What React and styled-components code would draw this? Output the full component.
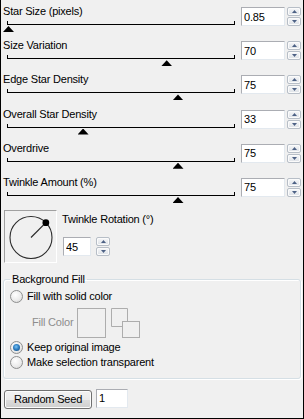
import React from 'react';
import styled, { createGlobalStyle } from 'styled-components';

const GlobalStyle = createGlobalStyle`
  html, body {
    margin: 0;
    padding: 0;
    background: #f0f0f0;
  }
  body {
    font-family: "Liberation Sans", Arial, sans-serif;
    font-size: 11px;
    letter-spacing: -0.2px;
    color: #000;
  }
`;

const sliders = [
  { label: 'Star Size (pixels)', value: '0.85', frac: 0 },
  { label: 'Size Variation', value: '70', frac: 0.7 },
  { label: 'Edge Star Density', value: '75', frac: 0.75 },
  { label: 'Overall Star Density', value: '33', frac: 0.33 },
  { label: 'Overdrive', value: '75', frac: 0.75 },
  { label: 'Twinkle Amount (%)', value: '75', frac: 0.75 },
];

const Panel = styled.div`
  box-sizing: border-box;
  width: 304px;
  height: 419px;
  background: #f0f0f0;
  border: 1px solid #000;
  border-top: none;
  padding: 5px 2px 0 2px;
  display: flex;
  flex-direction: column;
`;

const SliderRow = styled.div`
  display: flex;
  align-items: flex-start;
  height: 34.2px;
  flex-shrink: 0;
`;

const SliderCol = styled.div`
  flex: 1;
  display: flex;
  flex-direction: column;
`;

const Label = styled.div`
  line-height: 13px;
  white-space: nowrap;
  color: ${(p) => (p.$disabled ? '#8d8d8d' : '#000')};
`;

const Track = styled.div`
  position: relative;
  margin: 3px 0 0 4px;
  height: 3px;
  border: 1px solid #000;
  border-top: none;
`;

const Thumb = styled.div`
  position: absolute;
  top: calc(100% + 2px);
  width: 11px;
  height: 6px;
  background: #000;
  clip-path: polygon(50% 0, 100% 100%, 0 100%);
`;

const NumBox = styled.input`
  box-sizing: border-box;
  width: ${(p) => p.$w}px;
  height: 19px;
  margin: ${(p) => p.$mt || 0}px 0 0 ${(p) => p.$ml || 0}px;
  border: 1px solid;
  border-color: #abadb3 #e3e9ef #e3e9ef #abadb3;
  padding: 0 2px;
  font: inherit;
  letter-spacing: inherit;
  color: #000;
  background: #fff;
  outline: none;
`;

const Spinner = styled.div`
  box-sizing: border-box;
  width: 14px;
  height: 19px;
  margin: ${(p) => p.$mt || 0}px 0 0 ${(p) => p.$ml}px;
  display: flex;
  flex-direction: column;
  gap: 1px;
`;

const SpinButton = styled.div`
  flex: 1;
  display: flex;
  align-items: center;
  justify-content: center;
  border: 1px solid #b7bec7;
  border-radius: 2px;
  background: linear-gradient(#f6f7f9, #dde1e6);
  box-shadow: inset 0 0 0 1px #fbfbfb;
`;

const Arrow = ({ down }) => (
  <svg width="5" height="3" viewBox="0 0 5 3">
    <polygon points={down ? '0,0 5,0 2.5,3' : '0,3 5,3 2.5,0'} fill="#4d6185" />
  </svg>
);

const Spin = (props) => (
  <Spinner {...props}>
    <SpinButton>
      <Arrow />
    </SpinButton>
    <SpinButton>
      <Arrow down />
    </SpinButton>
  </Spinner>
);

const RotationSection = styled.div`
  display: flex;
  align-items: flex-start;
  padding-left: 1px;
`;

const Dial = styled.div`
  box-sizing: border-box;
  width: 53px;
  height: 53px;
  border: 1px solid;
  border-color: #a0a0a0 #fff #fff #a0a0a0;
  flex-shrink: 0;
`;

const RotationControls = styled.div`
  display: flex;
  flex-direction: column;
  margin-left: 5px;
  padding-top: 3px;
`;

const InlineRow = styled.div`
  display: flex;
  align-items: flex-start;
  margin-top: ${(p) => p.$mt || 0}px;
  margin-left: ${(p) => p.$ml || 0}px;
`;

const Group = styled.fieldset`
  margin: 10px 0 0 0;
  padding: 0 6px 8.5px 6px;
  border: 1px solid #d5dfe5;
  border-radius: 3px;
  box-shadow: 1px 1px 0 #fff, inset 1px 1px 0 #fff;
  min-width: 0;
`;

const Legend = styled.legend`
  padding: 0 2px;
  line-height: 13px;
`;

const RadioRow = styled.label`
  display: flex;
  align-items: center;
  gap: 4px;
  height: 13px;
  line-height: 13px;
  margin-top: ${(p) => p.$mt}px;
`;

const RadioDot = styled.span`
  position: relative;
  box-sizing: border-box;
  width: 13px;
  height: 13px;
  border-radius: 50%;
  border: 1px solid #8e8f8f;
  background: radial-gradient(circle at 40% 35%, #ffffff 0%, #ececec 55%, #d2d2d2 100%);
  flex-shrink: 0;

  &::after {
    content: '';
    display: ${(p) => (p.$checked ? 'block' : 'none')};
    position: absolute;
    left: 2px;
    top: 2px;
    width: 7px;
    height: 7px;
    border-radius: 50%;
    background: radial-gradient(circle at 45% 40%, #7cc4f4 0%, #2f7fc3 45%, #0e3e6e 100%);
  }
`;

const FillRow = styled.div`
  display: flex;
  align-items: center;
  margin: 4.5px 0 0 22px;
`;

const Swatch = styled.div`
  box-sizing: border-box;
  width: 29px;
  height: 30px;
  border: 1px solid #adadad;
  background: #f0f0f0;
`;

const SwapIcon = () => (
  <svg width="29" height="30" viewBox="0 0 29 30" style={{ marginLeft: 5 }}>
    <path
      d="M0.5 18.5 V0.5 H16.5 V13.5 M0.5 18.5 H11.5"
      fill="none"
      stroke="#adadad"
      strokeWidth="1"
    />
    <rect x="11.5" y="13.5" width="17" height="16" fill="none" stroke="#adadad" strokeWidth="1" />
  </svg>
);

const BottomRow = styled.div`
  display: flex;
  align-items: flex-start;
  margin-top: 11px;
  padding-left: 1px;
`;

const Button = styled.button`
  box-sizing: border-box;
  width: 88px;
  height: 19px;
  padding: 0;
  font: inherit;
  letter-spacing: inherit;
  color: #000;
  border: 1px solid #707070;
  border-radius: 3px;
  background: linear-gradient(#f2f2f2 0%, #ebebeb 50%, #dddddd 51%, #cfcfcf 100%);
  box-shadow: inset 0 0 0 1px #fcfcfc;
`;

const RotationDial = ({ angle }) => {
  const cx = 26;
  const cy = 26.5;
  const r = 21;
  const a = (angle * Math.PI) / 180;
  const dx = cx + r * Math.cos(a);
  const dy = cy - r * Math.sin(a);
  return (
    <svg width="51" height="51" viewBox="0 0 51 51">
      <circle cx={cx} cy={cy} r={r} fill="none" stroke="#2b2b2b" strokeWidth="1.1" />
      <line x1={cx} y1={cy} x2={dx} y2={dy} stroke="#2b2b2b" strokeWidth="1.2" />
      <circle cx={dx} cy={dy} r="3.4" fill="#000" />
    </svg>
  );
};

export default function App() {
  return (
    <>
      <GlobalStyle />
      <Panel>
        {sliders.map((s) => (
          <SliderRow key={s.label}>
            <SliderCol>
              <Label>{s.label}</Label>
              <Track>
                <Thumb style={{ left: `calc(${s.frac * 100}% - 5px)` }} />
              </Track>
            </SliderCol>
            <NumBox readOnly defaultValue={s.value} $w={44} $mt={2} $ml={6} />
            <Spin $mt={2} $ml={2} />
          </SliderRow>
        ))}

        <RotationSection>
          <Dial>
            <RotationDial angle={45} />
          </Dial>
          <RotationControls>
            <Label>Twinkle Rotation (°)</Label>
            <InlineRow $mt={11} $ml={1}>
              <NumBox readOnly defaultValue="45" $w={28} />
              <Spin $ml={5} />
            </InlineRow>
          </RotationControls>
        </RotationSection>

        <Group>
          <Legend>Background Fill</Legend>
          <RadioRow $mt={4}>
            <RadioDot />
            Fill with solid color
          </RadioRow>
          <FillRow>
            <Label $disabled style={{ width: 45 }}>Fill Color</Label>
            <Swatch />
            <SwapIcon />
          </FillRow>
          <RadioRow $mt={3.5}>
            <RadioDot $checked />
            Keep original image
          </RadioRow>
          <RadioRow $mt={2}>
            <RadioDot />
            Make selection transparent
          </RadioRow>
        </Group>

        <BottomRow>
          <Button>Random Seed</Button>
          <NumBox readOnly defaultValue="1" $w={32} $mt={-1} $ml={4} />
        </BottomRow>
      </Panel>
    </>
  );
}
